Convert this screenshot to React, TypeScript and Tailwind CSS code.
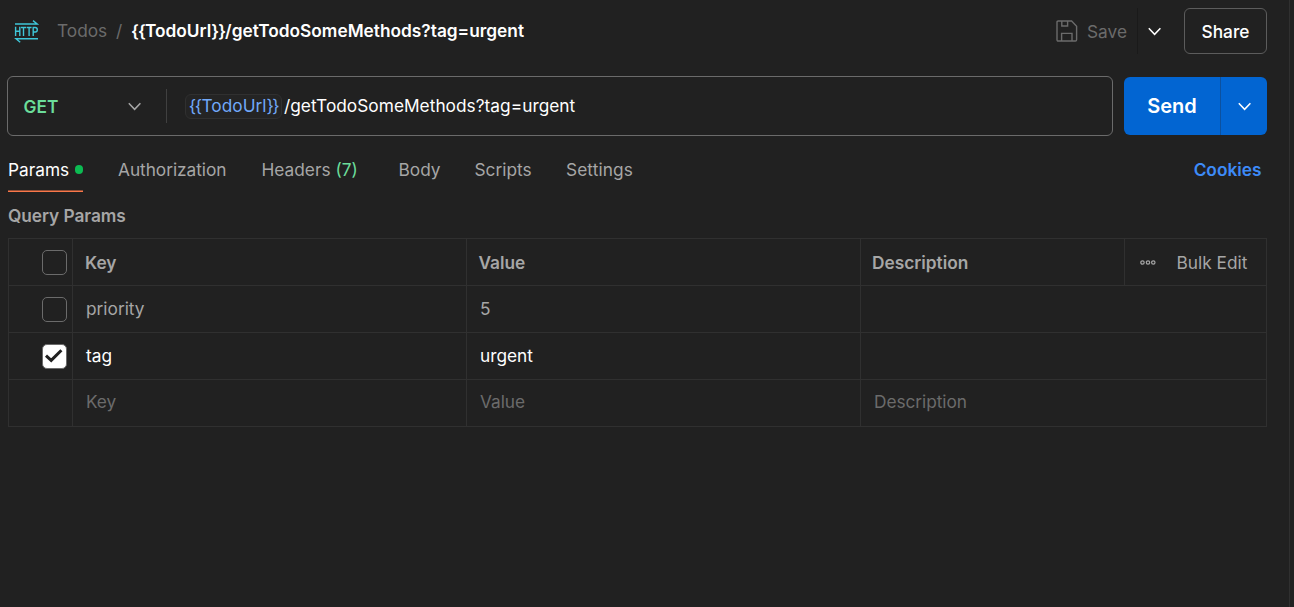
import React from 'react';

function Chevron({ className }: { className: string }) {
  return (
    <svg className={className} width="14" height="9" viewBox="0 0 14 9" fill="none" stroke="currentColor" strokeWidth="1.5">
      <path d="M0.8 1.3 6.6 7.3 12.4 1.3" />
    </svg>
  );
}

function HttpIcon() {
  return (
    <svg width="26" height="24" viewBox="0 0 26 24" fill="none" stroke="#3fc6d8" strokeWidth="1.4">
      <path d="M1 5H23.2L19 1.6M24 19.7H2L6.2 23.2" />
      <path d="M1.6 7.8V17M5.8 7.8V17M1.6 12.2H5.8M7 8.5H12M9.5 8.5V17M12.6 8.5H17.6M15.1 8.5V17M19.2 17V8.5H21.2Q23.3 8.5 23.3 10.7T21.2 13H19.2" />
    </svg>
  );
}

function SaveIcon() {
  return (
    <svg width="22" height="22" viewBox="0 0 22 22" fill="none" stroke="currentColor" strokeWidth="1.4">
      <path d="M1 2.2Q1 1 2.2 1H15.6L20.6 6.2V19.8Q20.6 21 19.4 21H2.2Q1 21 1 19.8Z" />
      <path d="M5.8 1V6H11.6V1M5.6 21V13.4H16V21" />
    </svg>
  );
}

function Box({ checked = false }: { checked?: boolean }) {
  return (
    <span className={`flex h-[25px] w-[25px] items-center justify-center rounded-[5px] border border-[#6b6b6b] ${checked ? 'bg-white' : ''}`}>
      {checked && (
        <svg className="-ml-[2px] -mt-px" width="19" height="15" viewBox="0 0 19 15" fill="none" stroke="#212121" strokeWidth="3">
          <path d="M2 7.6 7.2 12.4 17.4 2.2" />
        </svg>
      )}
    </span>
  );
}

const cell = 'border-l border-[#303030] flex items-center';

function Row({ checked, k, v, d, tone }: { checked?: boolean; k: string; v: string; d: string; tone: string }) {
  return (
    <div className={`grid h-[47px] grid-cols-[63px_394px_394px_1fr] border-t border-[#303030] ${tone}`}>
      <div className="flex items-center pl-[33px]">{checked !== undefined && <Box checked={checked} />}</div>
      <div className={`${cell} pl-[13px]`}>{k}</div>
      <div className={`${cell} pl-[13px]`}>{v}</div>
      <div className={`${cell} pl-[13px]`}>{d}</div>
    </div>
  );
}

export default function App() {
  return (
    <div className="flex h-[607px] w-[1294px] overflow-hidden bg-[#212121] font-['Inter',sans-serif] text-[17.3px] leading-6 text-[#a6a6a6]">
      <main className="w-[1290px] border-r border-[#303030] pl-[7px] pr-[22px] pt-2">
        <header className="flex h-[46px] items-center">
          <div className="ml-[7px] flex h-6 w-[43px] items-center"><HttpIcon /></div>
          <span className="w-[59px] tracking-[-0.02px] text-[#6b6b6b]">Todos</span>
          <span className="w-[15px] text-[#6b6b6b]">/</span>
          <h1 className="font-semibold text-white"><span className="tracking-[-0.9px]">{'{{'}</span>TodoUrl<span className="tracking-[-0.9px]">{'}}'}</span>/getTodoSomeMethods?tag=urgent</h1>
          <div className="ml-auto flex items-center text-[#6b6b6b]">
            <SaveIcon />
            <span className="ml-[9px] w-[50px] pt-0.5">Save</span>
            <div className="flex h-[46px] w-[47px] items-center border-l border-[#1a1a1a] pl-[10px]"><Chevron className="text-white" /></div>
            <button className="h-[46px] w-[83px] rounded-md border border-[#5c5c5c] pt-0.5 font-medium text-white">Share</button>
          </div>
        </header>
        <section className="mt-[22px] flex h-[60px] items-center">
          <div className="flex h-[60px] w-[1106px] items-center rounded-md border border-[#6b6b6b]">
            <span className="w-[120px] pl-[15.5px] pt-0.5 font-semibold text-[#6bdd9a]">GET</span>
            <Chevron className="text-[#a6a6a6]" />
            <span className="ml-[24px] h-[34px] w-px bg-[#404040]" />
            <span className="ml-[18px] flex h-[25px] w-[97px] items-center justify-center rounded-md border border-[#303030] bg-[#242424] text-[#71a9fa]"><span className="tracking-[-1.5px]">{'{{'}</span><span className="ml-px">TodoUrl</span><span className="tracking-[-1.5px]">{'}}'}</span></span>
            <span className="ml-0.5 tracking-[0.02px] text-white">/getTodoSomeMethods?tag=urgent</span>
          </div>
          <div className="ml-[11px] flex h-[58px] w-[143px] items-center rounded-md bg-[#0265d2] text-white">
            <button className="w-24 text-xl font-semibold">Send</button>
            <span className="flex h-full flex-1 items-center justify-center border-l border-[#0c519f] pl-px pt-px"><Chevron className="" /></span>
          </div>
        </section>
        <nav className="ml-px mt-[22px] flex h-[34px] items-start">
          <div className="w-[75px] text-white">
            <div className="flex h-8 justify-between"><span>Params</span><i className="mt-[7px] h-[9px] w-[8px] rounded-full bg-[#0cbb52]" /></div>
            <div className="h-px bg-[#8f4c35]" />
            <div className="h-px bg-[#f97749]" />
          </div>
          <span className="ml-[35px] w-[143.5px] tracking-[-0.04px]">Authorization</span>
          <span className="w-[137px]">Headers <span className="text-[#6bdd9a]">(7)</span></span>
          <span className="w-[76px]">Body</span>
          <span className="w-[91.5px]">Scripts</span>
          <span className="tracking-[0.1px]">Settings</span>
          <span className="ml-auto mr-[5.5px] font-semibold text-[#3d8bf8]">Cookies</span>
        </nav>
        <h2 className="ml-px mt-3 font-semibold tracking-[-0.05px]">Query Params</h2>
        <div className="ml-px mt-[10px] border-x border-b border-[#303030]">
          <div className="grid h-[47px] grid-cols-[63px_394px_394px_264px_1fr] border-t border-[#303030] font-semibold">
            <div className="flex items-center pl-[33px]"><Box /></div>
            <div className={`${cell} pl-3 pt-0.5`}>Key</div>
            <div className={`${cell} pl-[11.5px] pt-0.5`}>Value</div>
            <div className={`${cell} pl-[11px] pt-0.5`}>Description</div>
            <div className={`${cell} pl-[15px] font-normal`}>
              <svg width="16" height="6" viewBox="0 0 16 6" fill="none" stroke="currentColor" strokeWidth="1.2"><circle cx="2.5" cy="3.5" r="1.7" /><circle cx="8" cy="3.5" r="1.7" /><circle cx="13.3" cy="3.5" r="1.7" /></svg>
              <span className="ml-[20.5px] pt-0.5">Bulk Edit</span>
            </div>
          </div>
          <Row checked={false} k="priority" v="5" d="" tone="" />
          <Row checked k="tag" v="urgent" d="" tone="text-white" />
          <Row k="Key" v="Value" d="Description" tone="pb-0.5 tracking-[-0.06px] text-[#6b6b6b] [&>div]:-mb-0.5 [&>div]:pb-0.5" />
        </div>
      </main>
    </div>
  );
}
